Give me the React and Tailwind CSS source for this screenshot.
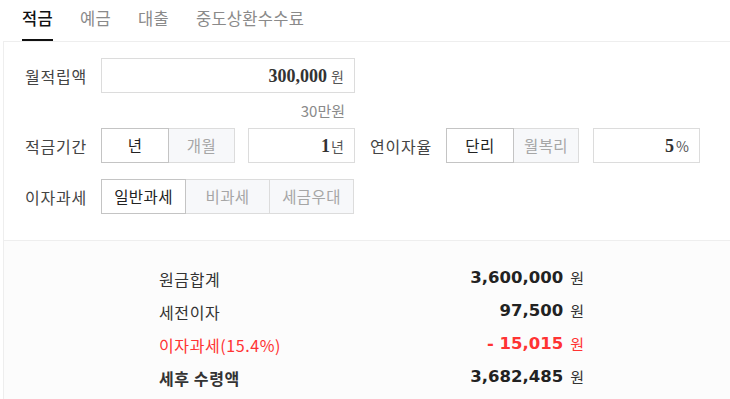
import React, { useState } from 'react';

const KR = { fontFamily: '"Noto Sans CJK KR", "Noto Sans", sans-serif' };
const SERIF = { fontFamily: '"Liberation Serif", "DejaVu Serif", serif' };
const NUM = { fontFamily: '"DejaVu Sans", Verdana, sans-serif' };

const tabs = ['적금', '예금', '대출', '중도상환수수료'];

// 세그먼트 버튼 (년/개월, 단리/월복리 등)
const Segmented = ({ options, widths, value, onChange }) => (
  <div className="flex">
    {options.map((opt, i) => {
      const active = opt === value;
      return (
        <button
          key={opt}
          onClick={() => onChange(opt)}
          style={{ width: widths[i] }}
          className={
            'h-[35px] border text-[15.5px] tracking-[0.4px] ' +
            (i > 0 ? '-ml-px ' : '') +
            (active
              ? 'relative z-10 bg-white border-[#c4c4c4] text-[#222]'
              : 'bg-[#f7f8fa] border-[#dcdcdc] text-[#a6a6a6]')
          }
        >
          {opt}
        </button>
      );
    })}
  </div>
);

const NumInput = ({ value, unit, width, gap = 'ml-[4px]' }) => (
  <div
    style={{ width }}
    className="h-[35px] border border-[#dcdcdc] bg-white flex items-center justify-end pr-[10px]"
  >
    <span style={SERIF} className="text-[18px] font-bold text-[#333] leading-none">
      {value}
    </span>
    <span className={gap + ' text-[14px] text-[#555] leading-none'}>{unit}</span>
  </div>
);

const Label = ({ children }) => (
  <div className="w-[76px] shrink-0 text-[16px] tracking-[0.8px] text-[#444]">{children}</div>
);

export default function App() {
  const [tab, setTab] = useState('적금');
  const [period, setPeriod] = useState('년');
  const [rateType, setRateType] = useState('단리');
  const [taxType, setTaxType] = useState('일반과세');

  const results = [
    { label: '원금합계', value: '3,600,000' },
    { label: '세전이자', value: '97,500' },
    { label: '이자과세(15.4%)', value: '- 15,015', red: true },
    { label: '세후 수령액', value: '3,682,485', bold: true },
  ];

  return (
    <div style={KR} className="w-[730px] h-[399px] bg-white overflow-hidden">
      {/* 상단 탭 */}
      <div className="flex h-[41px] pl-[22px] gap-[27px]">
        {tabs.map((t) => (
          <button
            key={t}
            onClick={() => setTab(t)}
            className={
              'h-[41px] text-[16.5px] tracking-[0.3px] leading-none pb-[2px] border-b-2 ' +
              (tab === t ? 'border-[#111] text-[#111] font-medium' : 'border-transparent text-[#8a8a8a]')
            }
          >
            {t}
          </button>
        ))}
      </div>

      <div className="ml-[3px] border-l border-t border-[#eeeeee]">
        {/* 입력 영역 */}
        <div className="pl-[21px] pt-[16px] pb-[26px]">
          <div className="flex items-center">
            <Label>월적립액</Label>
            <NumInput value="300,000" unit="원" width={254} />
          </div>
          <div className="w-[320px] text-right text-[15px] text-[#8a8a8a] h-[35px] leading-[35px]">
            30만원
          </div>
          <div className="flex items-center">
            <Label>적금기간</Label>
            <Segmented options={['년', '개월']} widths={[68, 67]} value={period} onChange={setPeriod} />
            <div className="ml-[13px]">
              <NumInput value="1" unit="년" width={107} gap="ml-[1px]" />
            </div>
            <div className="ml-[15px] flex items-center">
              <Label>연이자율</Label>
              <Segmented options={['단리', '월복리']} widths={[68, 66]} value={rateType} onChange={setRateType} />
              <div className="ml-[14px]">
                <NumInput value="5" unit="%" width={107} gap="ml-[2px]" />
              </div>
            </div>
          </div>
          <div className="flex items-center mt-[16px]">
            <Label>이자과세</Label>
            <Segmented
              options={['일반과세', '비과세', '세금우대']}
              widths={[85, 85, 85]}
              value={taxType}
              onChange={setTaxType}
            />
          </div>
        </div>

        {/* 결과 영역 */}
        <div className="border-t border-[#eeeeee] bg-[#fcfcfc] h-[200px] pt-[21px] pl-[155px]">
          <div className="w-[425px]">
            {results.map((r) => (
              <div key={r.label} className="flex items-center justify-between h-[33px]">
                <span
                  className={
                    'text-[16px] tracking-[0.6px] ' +
                    (r.red ? 'text-[#ff3333]' : 'text-[#333]') +
                    (r.bold ? ' font-bold' : '')
                  }
                >
                  {r.label}
                </span>
                <span className="flex items-center">
                  <span
                    style={NUM}
                    className={'text-[16.5px] font-bold ' + (r.red ? 'text-[#ff3333]' : 'text-[#222]')}
                  >
                    {r.value}
                  </span>
                  <span className={'ml-[7px] text-[15px] ' + (r.red ? 'text-[#ff3333]' : 'text-[#333]')}>원</span>
                </span>
              </div>
            ))}
          </div>
        </div>
      </div>
    </div>
  );
}
